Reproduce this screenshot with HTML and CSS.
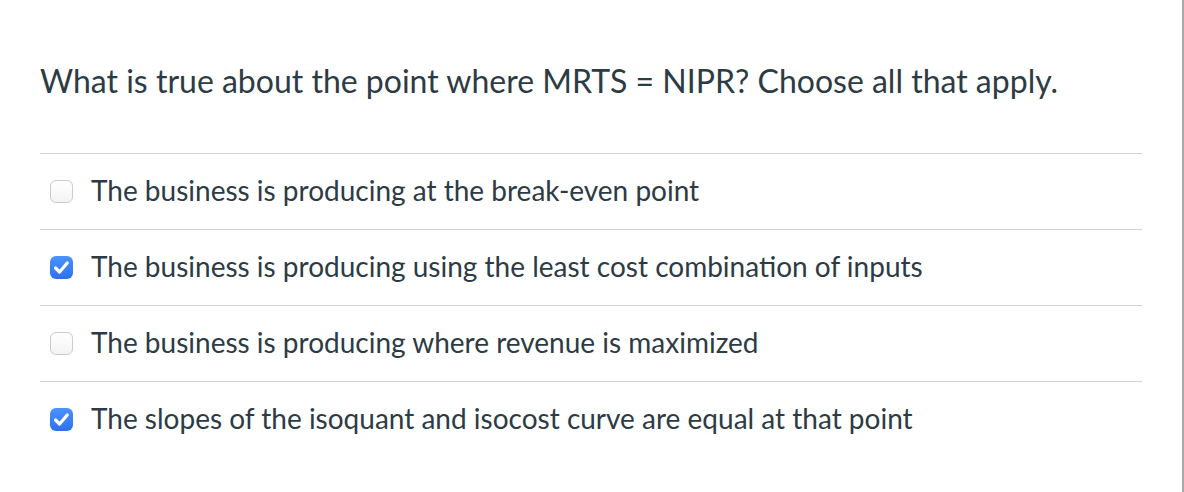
FILE: index.html
```html
<!DOCTYPE html>
<html>
<head>
<meta charset="utf-8">
<link rel="stylesheet" href="styles.css">
</head>
<body>
<div class="page">
  <div class="quiz">
    <p class="question">What is true about the point where MRTS = NIPR? Choose all that apply.</p>
    <ul class="answers">
      <li class="answer">
        <span class="box"></span>
        <span class="label">The business is producing at the break-even point</span>
      </li>
      <li class="answer">
        <span class="box checked"><svg viewBox="0 0 23 23" width="23" height="23"><path d="M5.5 12 L9.6 16 L17.2 7" fill="none" stroke="#fff" stroke-width="3.2" stroke-linecap="round" stroke-linejoin="round"/></svg></span>
        <span class="label">The business is producing using the least cost combination of inputs</span>
      </li>
      <li class="answer">
        <span class="box"></span>
        <span class="label">The business is producing where revenue is maximized</span>
      </li>
      <li class="answer">
        <span class="box checked"><svg viewBox="0 0 23 23" width="23" height="23"><path d="M5.5 12 L9.6 16 L17.2 7" fill="none" stroke="#fff" stroke-width="3.2" stroke-linecap="round" stroke-linejoin="round"/></svg></span>
        <span class="label">The slopes of the isoquant and isocost curve are equal at that point</span>
      </li>
    </ul>
  </div>
</div>
</body>
</html>
```

FILE: styles.css
```css
html, body {
  margin: 0;
  padding: 0;
  background: #fff;
}
.page {
  width: 1182px;
  height: 492px;
  border-right: 2px solid #a9a9a9;
  font-family: Lato, "Liberation Sans", sans-serif;
  color: #2d3b45;
  overflow: hidden;
}
.quiz {
  width: 1102px;
  padding-left: 40px;
  padding-top: 61px;
}
.question {
  margin: 0 0 52px 0;
  font-size: 32px;
  line-height: 40px;
}
.answers {
  list-style: none;
  margin: 0;
  padding: 0;
}
.answer {
  display: flex;
  align-items: center;
  height: 75px;
  border-top: 1px solid #d0d4d7;
}
.box {
  box-sizing: border-box;
  flex: none;
  width: 23px;
  height: 23px;
  margin-left: 10px;
  margin-right: 18px;
  border: 1px solid #c8ccce;
  border-radius: 6px;
  background: linear-gradient(#ffffff, #f4f4f4);
  display: flex;
  align-items: center;
  justify-content: center;
}
.box.checked {
  border: none;
  background: linear-gradient(#4a93ff, #2d70f3);
}
.label {
  font-size: 28px;
  line-height: 36px;
  margin-top: -3px;
}
```
